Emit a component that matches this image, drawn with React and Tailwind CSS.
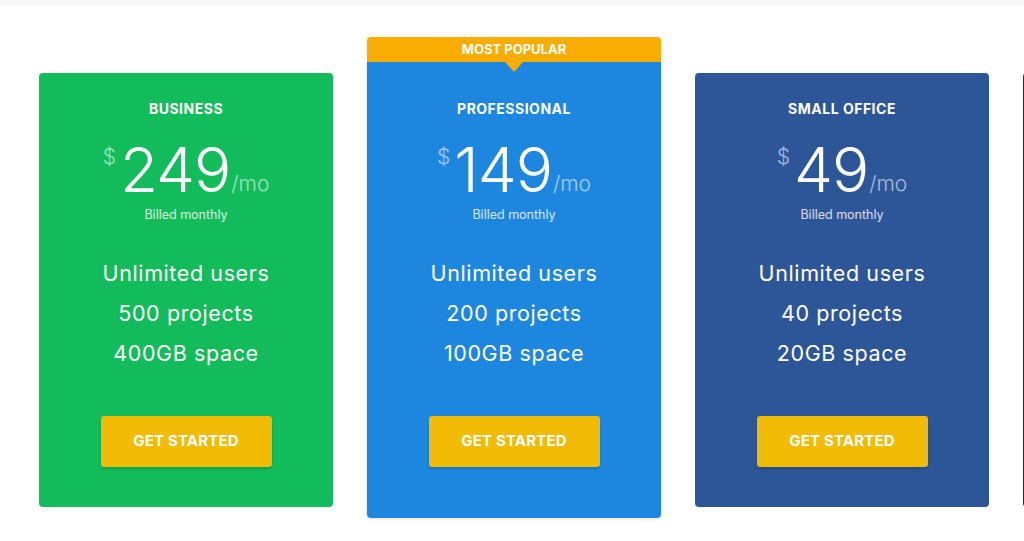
import React from "react";

const PLANS = [
  {
    name: "Business",
    price: "249",
    users: "Unlimited users",
    projects: "500 projects",
    space: "400GB space",
    bg: "bg-[#12bc5a]",
  },
  {
    name: "Professional",
    price: "149",
    users: "Unlimited users",
    projects: "200 projects",
    space: "100GB space",
    bg: "bg-[#1d87e0]",
    popular: true,
  },
  {
    name: "Small Office",
    price: "49",
    users: "Unlimited users",
    projects: "40 projects",
    space: "20GB space",
    bg: "bg-[#2d5699]",
  },
];

function PlanBody({ plan }) {
  return (
    <>
      <h3 className="text-[14px] leading-[20px] font-bold uppercase tracking-[0.5px]">
        {plan.name}
      </h3>
      <div className="mt-[20px] flex items-start justify-center">
        <span className="mt-[6px] mr-[4px] text-[21px] leading-[24px] font-light text-white/60">
          $
        </span>
        <span className="text-[62px] leading-[62px] font-light tracking-[-1px]">
          {plan.price}
        </span>
        <span className="mt-[33px] ml-[1px] text-[21px] leading-[24px] font-light text-white/60">
          /mo
        </span>
      </div>
      <p className="mt-[6px] text-[12.5px] leading-[16px] text-white/80">
        Billed monthly
      </p>
      <ul className="mt-[30px] text-[21.5px] leading-[40px] tracking-[0.6px]">
        <li>{plan.users}</li>
        <li>{plan.projects}</li>
        <li>{plan.space}</li>
      </ul>
      <button className="mx-auto mt-[43px] flex h-[51px] w-[171px] items-center justify-center rounded-[3px] bg-[#f1bb06] text-[15px] font-bold uppercase tracking-[0.2px] text-white shadow-[0_2px_3px_rgba(0,0,0,0.15)]">
        Get started
      </button>
    </>
  );
}

export default function App() {
  return (
    <div
      className="h-[541px] w-full overflow-hidden bg-white text-white"
      style={{ fontFamily: "Inter, 'Open Sans', sans-serif" }}
    >
      <div className="h-[5px] bg-[#f7f7f7]" />
      <div className="flex items-start gap-[34px] pt-[32px] pl-[39px]">
        {PLANS.map((plan) =>
          plan.popular ? (
            <div
              key={plan.name}
              className="w-[294px] shrink-0 overflow-hidden rounded-[4px] text-center shadow-[0_1px_3px_rgba(0,0,0,0.12)]"
            >
              <div className="relative h-[25px] bg-[#f8ad00] text-[13px] leading-[25px] font-bold uppercase">
                Most popular
                <div className="absolute top-[25px] left-1/2 h-0 w-0 -translate-x-1/2 border-t-[10px] border-r-[9px] border-l-[9px] border-t-[#f8ad00] border-r-transparent border-l-transparent" />
              </div>
              <div className={`${plan.bg} pt-[37px] pb-[51px]`}>
                <PlanBody plan={plan} />
              </div>
            </div>
          ) : (
            <div
              key={plan.name}
              className={`${plan.bg} mt-[36px] w-[294px] shrink-0 rounded-[4px] pt-[26px] pb-[40px] text-center`}
            >
              <PlanBody plan={plan} />
            </div>
          )
        )}
        <div className="mt-[36px] h-[434px] w-[294px] shrink-0 rounded-[4px] bg-[#252a3a]" />
      </div>
    </div>
  );
}
